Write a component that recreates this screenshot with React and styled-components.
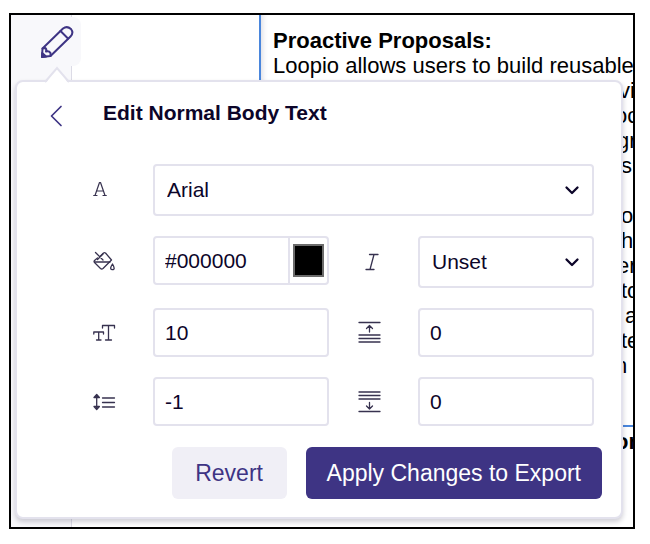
import React, { useState } from "react";
import styled, { createGlobalStyle } from "styled-components";

const ink = "#0c0529";
const iconInk = "#37324f";
const brand = "#3e3484";
const line = "#e3e2ed";
const blue = "#4a86dc";

const GlobalStyle = createGlobalStyle`
  *, *::before, *::after { box-sizing: border-box; }
  body {
    margin: 0;
    background: #fff;
    color: ${ink};
    font-family: "Liberation Sans", Arial, Helvetica, sans-serif;
  }
  button, input, select { font: inherit; color: inherit; }
`;

const Page = styled.main`
  display: flex;
  min-height: 100vh;
  padding: 13px 15px 15px 9px;
`;

const Frame = styled.div`
  position: relative;
  display: flex;
  flex: 1;
  min-width: 0;
  border: 2px solid #000;
  overflow: hidden;
`;

const Rail = styled.aside`
  flex: none;
  width: 61px;
  padding-top: 2px;
  background: #f8f8fb;
  border-right: 1px solid #dcdbe6;
`;

const RailTab = styled.button`
  display: flex;
  align-items: center;
  justify-content: flex-end;
  width: 70px;
  height: 49px;
  padding: 0 7px 0 0;
  border: 0;
  border-radius: 0 8px 8px 0;
  background: #f8f8fb;
  color: ${brand};
`;

const Margin = styled.div`
  flex: none;
  width: 187px;
`;

const Document = styled.article`
  flex: 1;
  min-width: 0;
  color: #000;
  font-size: 22px;
  line-height: 25px;
`;

const Answer = styled.section`
  padding: 13px 0 47px 12px;
  border: solid ${blue};
  border-width: 0 0 2px 2px;
  box-shadow: inset 6px 0 6px -5px #d6d6de;
  white-space: nowrap;
`;

const NextAnswer = styled.section`
  padding-top: 2px;
`;

const Heading = styled.h1`
  margin: 0;
  font-size: 22px;
  font-weight: 700;
`;

const Paragraph = styled.p`
  margin: 0;
`;

const Tail = styled.p`
  width: 18px;
  height: 25px;
  margin: 0 0 0 auto;
  padding-left: ${(p) => p.$start || 0}px;
  overflow: hidden;
  font-weight: ${(p) => (p.$bold ? 700 : 400)};
`;

const Popover = styled.section`
  position: absolute;
  top: 65px;
  left: 4px;
  right: 10px;
  padding: 16px 19px 18px 32px;
  border: 2px solid ${line};
  border-radius: 8px;
  background: #fff;
  box-shadow: 0 3px 5px rgba(20, 16, 50, 0.2);
`;

const Pointer = styled.svg`
  position: absolute;
  top: -16px;
  left: 26px;
`;

const Header = styled.header`
  display: flex;
  align-items: center;
  height: 30px;
  margin-bottom: 36px;
`;

const BackButton = styled.button`
  display: flex;
  width: 54px;
  padding: 6px 0 0;
  border: 0;
  background: none;
  color: ${brand};
`;

const Title = styled.h2`
  margin: 0;
  font-size: 21px;
  line-height: 28px;
`;

const Form = styled.form`
  display: grid;
  gap: 21px;
`;

const Fields = styled.div`
  display: grid;
  grid-template-columns: 60px 1fr 89px 1fr;
  row-gap: 20px;
  align-items: start;
  margin: 0 8px 0 44px;
`;

const IconLabel = styled.label`
  display: flex;
  align-items: center;
  justify-content: ${(p) => (p.$center ? "center" : "flex-start")};
  height: 49px;
  padding-right: ${(p) => (p.$center ? 8 : 0)}px;
  color: ${iconInk};
`;

const SelectBox = styled.div`
  position: relative;
  display: flex;
  align-items: center;
  grid-column: ${(p) => (p.$wide ? "2 / -1" : "auto")};

  svg {
    position: absolute;
    right: 14px;
    pointer-events: none;
  }
`;

const Select = styled.select`
  appearance: none;
  width: 100%;
  height: 52px;
  padding: 0 40px 2px 12px;
  border: 2px solid ${line};
  border-radius: 4px;
  background: #fff;
  font-size: 21px;
`;

const Input = styled.input`
  width: 100%;
  min-width: 0;
  height: 49px;
  padding: 0 10px;
  border: 2px solid ${line};
  border-radius: 4px;
  background: #fff;
  font-size: 21px;
`;

const ColourField = styled.div`
  display: flex;
  height: 49px;
  border: 2px solid ${line};
  border-radius: 4px;
`;

const ColourText = styled(Input)`
  flex: 1;
  height: 100%;
  border: 0;
`;

const SwatchCell = styled.div`
  display: flex;
  align-items: center;
  justify-content: center;
  flex: none;
  width: 39px;
  border-left: 2px solid ${line};
`;

const Swatch = styled.input`
  appearance: none;
  width: 31px;
  height: 33px;
  padding: 0;
  border: 0;
  background: none;

  &::-webkit-color-swatch-wrapper { padding: 0; }
  &::-webkit-color-swatch {
    border: 2px solid #6b6b6b;
    border-radius: 0;
  }
`;

const Actions = styled.footer`
  display: flex;
  justify-content: flex-end;
  gap: 19px;
`;

const ActionButton = styled.button`
  min-width: 115px;
  height: 52px;
  padding: 0 21px;
  border: 0;
  border-radius: 6px;
  background: ${(p) => (p.$primary ? brand : "#f0eff6")};
  color: ${(p) => (p.$primary ? "#fff" : brand)};
  font-size: 23px;
  white-space: nowrap;
`;

const Drawing = ({ w, h, sw = 1.4, children }) => (
  <svg
    width={w}
    height={h}
    viewBox={`0 0 ${w} ${h}`}
    fill="none"
    stroke="currentColor"
    strokeWidth={sw}
    strokeLinecap="round"
    strokeLinejoin="round"
    aria-hidden="true"
  >
    {children}
  </svg>
);

const PencilIcon = () => (
  <Drawing w={34} h={34} sw={2}>
    <path d="M2 32 L2.500 23.500 L23 3.500 Q27 0.500 31 4 Q34 8 30.500 11.500 L10.500 31 Z" />
    <path d="M20.500 6 L28 13.500 M2.500 23.500 L5 23 Q7 24 6 26.500 Q9 25.500 10.500 28 L10.500 31" />
    <path d="M2 32 L2.200 28 L6 31.500 Z" fill="currentColor" />
  </Drawing>
);

const BackIcon = () => (
  <Drawing w={14} h={22} sw={1.7}>
    <path d="M12 1.500 L2.500 11 L12 20.500" />
  </Drawing>
);

const ChevronIcon = () => (
  <Drawing w={16} h={11} sw={2.3}>
    <path d="M2.500 2.500 L8 8 L13.500 2.500" />
  </Drawing>
);

const FontIcon = () => (
  <Drawing w={14} h={16} sw={1.2}>
    <path d="M2 14.500 L6.500 1.500 H7.500 L12 14.500 M3.700 10 H10.300 M0.700 14.500 H4 M10 14.500 H13.300" />
  </Drawing>
);

const FillIcon = () => (
  <Drawing w={22} h={20} sw={1.3}>
    <path d="M7 5.500 L10.500 2 Q11.500 1.300 12.500 2 L18.500 9 L10 17.500 Q8.700 18.500 7.500 17.500 L1.500 11.500 Q0.700 10.300 1.500 9.500 L4.500 7" />
    <path d="M2.500 1.500 L10 9 M4.500 8.500 L10 3 M1.500 11 H17" />
    <path d="M19.500 13 Q16.500 17.500 18.500 18.500 Q20 19 21 18 Q21.700 16.500 19.500 13 Z" />
  </Drawing>
);

const ItalicIcon = () => (
  <Drawing w={18} h={20} sw={1.3}>
    <path d="M8.500 3.500 H17 M5 18.500 H13 M13 3.500 L9 18.500" />
  </Drawing>
);

const SizeIcon = () => (
  <Drawing w={23} h={18} sw={1.3}>
    <path d="M9.500 4 V1.500 H21.500 V4 M15.500 1.500 V16 M12.500 16 H18.500" />
    <path d="M0.800 10 V8 H10.500 V10 M5.700 8 V16 M3.500 16 H8" />
  </Drawing>
);

const SpacingIcon = () => (
  <Drawing w={23} h={18} sw={1.3}>
    <path d="M9.500 5 H21.500 M9.500 9.500 H21.500 M9.500 14 H21.500" />
    <path d="M3.700 2.500 V15.500 M1 4.500 L3.700 1.500 L6.400 4.500 Z M1 13.500 L3.700 16.500 L6.400 13.500 Z" />
  </Drawing>
);

const BeforeIcon = () => (
  <Drawing w={23} h={23} sw={1.3}>
    <path d="M1 1.500 H22 M1 14 H22 M1 17.500 H22 M1 21 H22 M11.500 11 V4.500 M8.500 7.500 L11.500 4.500 L14.500 7.500" />
  </Drawing>
);

const AfterIcon = () => (
  <Drawing w={23} h={23} sw={1.3}>
    <path d="M1 21.500 H22 M1 2 H22 M1 5.500 H22 M1 9 H22 M11.500 12.500 V19 M8.500 16 L11.500 19 L14.500 16" />
  </Drawing>
);

const tails = [
  { text: "vi", start: 4 },
  { text: "oc" },
  { text: "gr", start: 2 },
  { text: "s", start: 6 },
  { text: "" },
  { text: "o", start: 6 },
  { text: "h", start: 6 },
  { text: "er", start: 2 },
  { text: "to", start: 6 },
  { text: "a", start: 10 },
  { text: "te", start: 6 },
  { text: "n" },
];

export default function App() {
  const [colour, setColour] = useState("#000000");

  return (
    <>
      <GlobalStyle />
      <Page>
        <Frame>
          <Rail>
            <RailTab type="button" aria-label="Edit styles">
              <PencilIcon />
            </RailTab>
          </Rail>
          <Margin />
          <Document>
            <Answer>
              <Heading>Proactive Proposals:</Heading>
              <Paragraph>Loopio allows users to build reusable</Paragraph>
              {tails.map((t, i) => (
                <Tail key={i} $start={t.start}>{t.text}</Tail>
              ))}
            </Answer>
            <NextAnswer>
              <Tail $bold>or</Tail>
            </NextAnswer>
          </Document>

          <Popover aria-labelledby="popover-title">
            <Pointer width="28" height="17" viewBox="0 0 28 17" aria-hidden="true">
              <path d="M3 17 L14 2 L25 17 Z" fill="#fff" />
              <path d="M2 16 L14 2 L26 16" fill="none" stroke={line} strokeWidth="2" />
            </Pointer>
            <Header>
              <BackButton type="button" aria-label="Back">
                <BackIcon />
              </BackButton>
              <Title id="popover-title">Edit Normal Body Text</Title>
            </Header>
            <Form onSubmit={(e) => e.preventDefault()}>
              <Fields>
                <IconLabel htmlFor="font" aria-label="Font"><FontIcon /></IconLabel>
                <SelectBox $wide>
                  <Select id="font" defaultValue="Arial">
                    <option>Arial</option>
                  </Select>
                  <ChevronIcon />
                </SelectBox>

                <IconLabel htmlFor="colour" aria-label="Text colour"><FillIcon /></IconLabel>
                <ColourField>
                  <ColourText id="colour" value={colour} onChange={(e) => setColour(e.target.value)} />
                  <SwatchCell>
                    <Swatch
                      type="color"
                      aria-label="Pick a colour"
                      value={colour}
                      onChange={(e) => setColour(e.target.value)}
                    />
                  </SwatchCell>
                </ColourField>
                <IconLabel $center htmlFor="italic" aria-label="Italic"><ItalicIcon /></IconLabel>
                <SelectBox>
                  <Select id="italic" defaultValue="Unset">
                    <option>Unset</option>
                  </Select>
                  <ChevronIcon />
                </SelectBox>

                <IconLabel htmlFor="size" aria-label="Font size"><SizeIcon /></IconLabel>
                <Input id="size" defaultValue="10" />
                <IconLabel $center htmlFor="before" aria-label="Space before"><BeforeIcon /></IconLabel>
                <Input id="before" defaultValue="0" />

                <IconLabel htmlFor="spacing" aria-label="Line spacing"><SpacingIcon /></IconLabel>
                <Input id="spacing" defaultValue="-1" />
                <IconLabel $center htmlFor="after" aria-label="Space after"><AfterIcon /></IconLabel>
                <Input id="after" defaultValue="0" />
              </Fields>
              <Actions>
                <ActionButton type="button">Revert</ActionButton>
                <ActionButton type="submit" $primary>Apply Changes to Export</ActionButton>
              </Actions>
            </Form>
          </Popover>
        </Frame>
      </Page>
    </>
  );
}
